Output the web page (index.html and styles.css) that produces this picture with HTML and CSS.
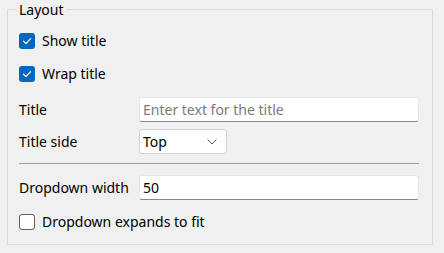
FILE: index.html
```html
<!DOCTYPE html>
<html lang="en">
<head>
<meta charset="UTF-8">
<title>Layout settings</title>
<link rel="stylesheet" href="styles.css">
</head>
<body>
<fieldset class="group">
    <legend class="group-title">Layout</legend>

    <label class="check-row first">
        <span class="box checked">
            <svg viewBox="0 0 16 16" width="16" height="16"><path d="M4.5 8.2 L7 10.6 L11.6 5.6" fill="none" stroke="#fff" stroke-width="1.2" stroke-linecap="round" stroke-linejoin="round"/></svg>
        </span>
        <span>Show title</span>
    </label>

    <label class="check-row">
        <span class="box checked">
            <svg viewBox="0 0 16 16" width="16" height="16"><path d="M4.5 8.2 L7 10.6 L11.6 5.6" fill="none" stroke="#fff" stroke-width="1.2" stroke-linecap="round" stroke-linejoin="round"/></svg>
        </span>
        <span>Wrap title</span>
    </label>

    <div class="field-row title-row">
        <label for="title">Title</label>
        <input type="text" id="title" class="text-box" placeholder="Enter text for the title">
    </div>

    <div class="field-row side-row">
        <label for="side">Title side</label>
        <div class="select-wrap">
            <select id="side" class="drop">
                <option>Top</option>
                <option>Bottom</option>
                <option>Left</option>
                <option>Right</option>
            </select>
            <svg class="chev" viewBox="0 0 10 6" width="10" height="6"><path d="M0.5 0.5 L5 5 L9.5 0.5" fill="none" stroke="#555" stroke-width="1"/></svg>
        </div>
    </div>

    <hr class="sep">

    <div class="field-row width-row">
        <label for="ddWidth">Dropdown width</label>
        <input type="text" id="ddWidth" class="text-box" value="50">
    </div>

    <label class="check-row last">
        <span class="box"></span>
        <span>Dropdown expands to fit</span>
    </label>
</fieldset>
</body>
</html>
```

FILE: styles.css
```css
body {
    margin: 0;
    background-color: #f0f0f0;
    font-family: "Noto Sans", sans-serif;
    font-size: 14px;
    color: #000;
}

.group {
    margin: 0 11px 0 7px;
    padding: 0 13px 14px 8px;
    border: 1px solid #d9d9d9;
    height: 245px;
    box-sizing: border-box;
}

.group-title {
    padding: 0 3px;
    line-height: 19px;
}

.check-row {
    display: flex;
    align-items: center;
    gap: 7px;
    height: 16px;
    margin-left: 3px;
    line-height: 16px;
}

.check-row.first {
    margin-top: 14px;
}

.check-row + .check-row {
    margin-top: 17px;
}

.box {
    width: 16px;
    height: 16px;
    box-sizing: border-box;
    border: 1px solid #5f5f5f;
    border-radius: 3px;
    background-color: #fff;
    flex: none;
}

.box.checked {
    border: none;
    background-color: #0067c0;
}

.box svg {
    display: block;
}

.field-row {
    display: grid;
    grid-template-columns: 120px 1fr;
    align-items: center;
    margin-left: 3px;
    height: 25px;
}

.title-row {
    margin-top: 15px;
}

.side-row {
    margin-top: 7px;
}

.text-box {
    height: 25px;
    box-sizing: border-box;
    border: 1px solid #e6e6e6;
    border-bottom: 1px solid #878787;
    border-radius: 3px;
    background-color: #fff;
    padding: 0 3px;
    font-family: inherit;
    font-size: 14px;
    color: #000;
    outline: none;
}

.text-box::placeholder {
    color: #7a7a7a;
}

.select-wrap {
    position: relative;
    width: 88px;
    height: 25px;
}

.drop {
    appearance: none;
    width: 88px;
    height: 25px;
    box-sizing: border-box;
    border: 1px solid #d3d3d3;
    border-radius: 3px;
    background-color: #fff;
    padding: 0 3px;
    font-family: inherit;
    font-size: 14px;
    color: #000;
}

.chev {
    position: absolute;
    right: 10px;
    top: 10px;
}

.sep {
    margin: 9px 0 0 3px;
    border: none;
    border-top: 1px solid #a0a0a0;
    height: 0;
}

.width-row {
    margin-top: 11px;
}

.check-row.last {
    margin-top: 14px;
}
```
